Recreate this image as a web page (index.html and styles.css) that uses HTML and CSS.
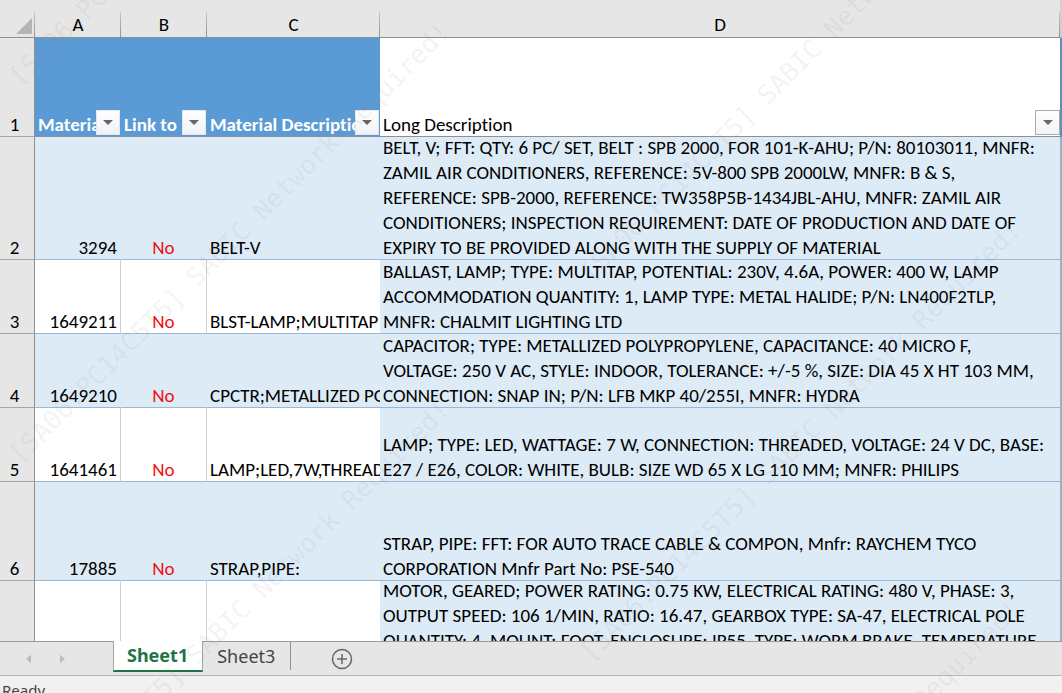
FILE: index.html
```html
<!DOCTYPE html>
<html lang="en">
<head>
<meta charset="utf-8">
<title>Materials workbook</title>
<link rel="stylesheet" href="styles.css">
</head>
<body>
<div class="app">
  <main class="grid">
    <table class="sheet">
      <colgroup>
        <col class="col-index"><col class="col-key"><col class="col-key"><col class="col-name"><col>
      </colgroup>
      <thead>
        <tr class="letters">
          <th class="corner"><svg class="corner-mark" viewBox="0 0 16 16" aria-hidden="true"><path d="M16 0V16H0Z"/></svg></th>
          <th>A</th><th>B</th><th>C</th><th class="last">D</th>
        </tr>
      </thead>
      <tbody>
        <tr class="titles">
          <th class="index">1</th>
          <td><span>Material</span><button class="filter" aria-label="Filter Material"></button></td>
          <td><span>Link to</span><button class="filter" aria-label="Filter Link to"></button></td>
          <td><span>Material Description</span><button class="filter" aria-label="Filter Material Description"></button></td>
          <td class="long plain"><span>Long Description</span><button class="filter" aria-label="Filter Long Description"></button></td>
        </tr>
        <tr class="band five">
          <th class="index">2</th><td class="num">3294</td><td class="no">No</td><td>BELT-V</td>
          <td class="long"><div>BELT, V; FFT: QTY: 6 PC/ SET, BELT : SPB 2000, FOR 101-K-AHU; P/N: 80103011, MNFR:<br>ZAMIL AIR CONDITIONERS, REFERENCE: 5V-800 SPB 2000LW, MNFR: B &amp; S,<br>REFERENCE: SPB-2000, REFERENCE: TW358P5B-1434JBL-AHU, MNFR: ZAMIL AIR<br>CONDITIONERS; INSPECTION REQUIREMENT: DATE OF PRODUCTION AND DATE OF<br>EXPIRY TO BE PROVIDED ALONG WITH THE SUPPLY OF MATERIAL</div></td>
        </tr>
        <tr class="three">
          <th class="index">3</th><td class="num">1649211</td><td class="no">No</td><td>BLST-LAMP;MULTITAP</td>
          <td class="long"><div>BALLAST, LAMP; TYPE: MULTITAP, POTENTIAL: 230V, 4.6A, POWER: 400 W, LAMP<br>ACCOMMODATION QUANTITY: 1, LAMP TYPE: METAL HALIDE; P/N: LN400F2TLP,<br>MNFR: CHALMIT LIGHTING LTD</div></td>
        </tr>
        <tr class="band three">
          <th class="index">4</th><td class="num">1649210</td><td class="no">No</td><td>CPCTR;METALLIZED PO</td>
          <td class="long"><div>CAPACITOR; TYPE: METALLIZED POLYPROPYLENE, CAPACITANCE: 40 MICRO F,<br>VOLTAGE: 250 V AC, STYLE: INDOOR, TOLERANCE: +/-5 %, SIZE: DIA 45 X HT 103 MM,<br>CONNECTION: SNAP IN; P/N: LFB MKP 40/255I, MNFR: HYDRA</div></td>
        </tr>
        <tr class="three">
          <th class="index">5</th><td class="num">1641461</td><td class="no">No</td><td>LAMP;LED,7W,THREAD</td>
          <td class="long"><div>LAMP; TYPE: LED, WATTAGE: 7 W, CONNECTION: THREADED, VOLTAGE: 24 V DC, BASE:<br>E27 / E26, COLOR: WHITE, BULB: SIZE WD 65 X LG 110 MM; MNFR: PHILIPS</div></td>
        </tr>
        <tr class="band four">
          <th class="index">6</th><td class="num">17885</td><td class="no">No</td><td>STRAP,PIPE:</td>
          <td class="long"><div>STRAP, PIPE: FFT: FOR AUTO TRACE CABLE &amp; COMPON, Mnfr: RAYCHEM TYCO<br>CORPORATION Mnfr Part No: PSE-540</div></td>
        </tr>
        <tr>
          <th class="index"></th><td></td><td></td><td></td>
          <td class="long"><div>MOTOR, GEARED; POWER RATING: 0.75 KW, ELECTRICAL RATING: 480 V, PHASE: 3,<br>OUTPUT SPEED: 106 1/MIN, RATIO: 16.47, GEARBOX TYPE: SA-47, ELECTRICAL POLE<br>QUANTITY: 4, MOUNT: FOOT, ENCLOSURE: IP55, TYPE: WORM BRAKE, TEMPERATURE</div></td>
        </tr>
      </tbody>
    </table>
  </main>

  <nav class="tabs" aria-label="Sheets">
    <div class="scroll">
      <button aria-label="Previous sheet"><svg viewBox="0 0 6 10"><path d="M6 0V10L0 5Z"/></svg></button>
      <button aria-label="Next sheet"><svg viewBox="0 0 6 10"><path d="M0 0V10L6 5Z"/></svg></button>
    </div>
    <button class="tab active">Sheet1</button>
    <button class="tab">Sheet3</button>
    <button class="add" aria-label="New sheet"><svg viewBox="0 0 22 22"><circle cx="11" cy="11" r="9.5"/><path d="M11 6V16M6 11H16"/></svg></button>
  </nav>
  <footer class="status">Ready</footer>

  <svg class="watermark" aria-hidden="true">
    <g>
      <text transform="translate(20 87) rotate(-45)">[SA06.PC14C5T5] SABIC Network Required!</text>
      <text transform="translate(20 465) rotate(-45)">[SA06.PC14C5T5] SABIC Network Required!</text>
      <text transform="translate(20 843) rotate(-45)">[SA06.PC14C5T5] SABIC Network Required!</text>
      <text transform="translate(591 283) rotate(-45)">[SA06.PC14C5T5] SABIC Network Required!</text>
      <text transform="translate(591 663) rotate(-45)">[SA06.PC14C5T5] SABIC Network Required!</text>
      <text transform="translate(591 1043) rotate(-45)">[SA06.PC14C5T5] SABIC Network Required!</text>
    </g>
  </svg>
</div>
</body>
</html>
```
FILE: styles.css
```css
* { box-sizing: border-box; }

body {
  margin: 0;
  background: #e6e6e6;
  color: #000;
  font-family: Carlito, Lato, sans-serif;
  font-size: 19px;
  font-variant-ligatures: none;
  line-height: 25px;
}

button {
  border: 0;
  padding: 0;
  background: none;
  font: inherit;
  color: inherit;
}

.app {
  position: relative;
  display: flex;
  flex-direction: column;
  height: 100vh;
  overflow: hidden;
}

.grid {
  flex: 1;
  min-height: 0;
  overflow: hidden;
  background: #fff;
}

.sheet {
  width: 100%;
  table-layout: fixed;
  border-collapse: separate;
  border-spacing: 0;
}

.col-index { width: 35px; }
.col-key { width: 86px; }
.col-name { width: 173px; }

.letters th {
  height: 38px;
  padding: 12px 0 0;
  border-bottom: 1px solid #8f8f8f;
  background: linear-gradient(#c8c8c8, #8f8f8f) right bottom / 1px 25px no-repeat #e6e6e6;
  font-weight: 400;
  line-height: 24px;
}

.letters .corner {
  padding: 0 3px 3px 0;
  text-align: right;
  vertical-align: bottom;
}

.corner-mark {
  display: block;
  width: 16px;
  height: 16px;
  margin-left: auto;
  fill: #b4b4b4;
}

.letters .last { border-right: 2px solid #d0d0d0; }

.sheet td,
.index {
  position: relative;
  padding: 0 3px;
  overflow: hidden;
  vertical-align: bottom;
  line-height: 23px;
  white-space: nowrap;
  border-bottom: 1px solid #9ab7d8;
}

.sheet td { border-right: 1px solid #d0d0d0; }

.sheet .index {
  padding: 0 5px 0 0;
  border-right: 1px solid #8f8f8f;
  border-bottom-color: #a6a6a6;
  background: #e6e6e6;
  font-weight: 400;
  text-align: center;
}

.sheet .num { text-align: right; }
.sheet .no { text-align: center; color: #f00c12; }

.band td {
  background: #ddebf7;
  border-right-color: #ddebf7;
}

.sheet .long {
  background: #ddebf7;
  border-right: 2px solid #9ab0c6;
}

.sheet td:nth-child(4) { border-right: 0; }

.long div {
  margin: -3px 0 -1px;
  line-height: 25px;
}

.titles { height: 99px; }
.five { height: 123px; }
.three { height: 74px; }
.four { height: 99px; }

.titles td {
  background: #5b9bd5;
  border-right: 1px solid #5b9bd5;
  border-bottom-color: #8f8f8f;
  color: #fff;
  font-weight: 700;
}

.titles td:nth-child(4) { border-right: 1px solid #5b9bd5; }

.titles .plain {
  background: #fff;
  border-right: 2px solid #5f8fb8;
  color: #000;
  font-weight: 400;
}

.filter {
  position: absolute;
  right: 0;
  bottom: 1px;
  width: 24px;
  height: 25px;
  border: 1px solid #e4e8ee;
  background: linear-gradient(#fff, #f0f2f7);
}

.plain .filter {
  width: 25px;
  border-color: #ababab;
}

.filter::after {
  content: "";
  display: block;
  width: 0;
  margin: 0 auto;
  border: 5px solid transparent;
  border-top-color: #666;
  border-bottom: 0;
}

.tabs {
  display: flex;
  height: 34px;
  border-top: 1px solid #9a9a9a;
  background: #e6e6e6;
  color: #444;
  font-family: "Noto Sans", sans-serif;
  font-size: 18px;
}

.scroll {
  display: flex;
  align-items: center;
  justify-content: space-between;
  width: 113px;
  padding: 0 48px 0 26px;
}

.scroll svg {
  display: block;
  width: 5px;
  height: 10px;
  fill: #bcbcbc;
}

.tab {
  height: 28px;
  padding: 0 15px 0 14px;
  border-right: 1px solid #8f8f8f;
}

.tab.active {
  height: 31px;
  margin-top: -1px;
  padding: 0 14px 0 13px;
  border-left: 1px solid #a6a6a6;
  border-right: 1px solid #a6a6a6;
  border-bottom: 2px solid #217346;
  background: #fff;
  color: #217346;
  font-weight: 700;
}

.add {
  margin-left: 40px;
}

.add svg {
  display: block;
  width: 22px;
  height: 22px;
  fill: none;
  stroke: #666;
  stroke-width: 1.5;
}

.status {
  height: 18px;
  padding: 2px 2px 0;
  overflow: hidden;
  border-top: 1px solid #b8b8b8;
  background: #f1f1f1;
  color: #444;
  font-family: "Noto Sans", sans-serif;
  font-size: 15px;
}

.watermark {
  position: absolute;
  inset: 0;
  width: 100%;
  height: 100%;
  pointer-events: none;
  fill: #808080;
  fill-opacity: 0.1;
  font-family: "DejaVu Sans Mono", monospace;
  font-size: 26px;
}
```
